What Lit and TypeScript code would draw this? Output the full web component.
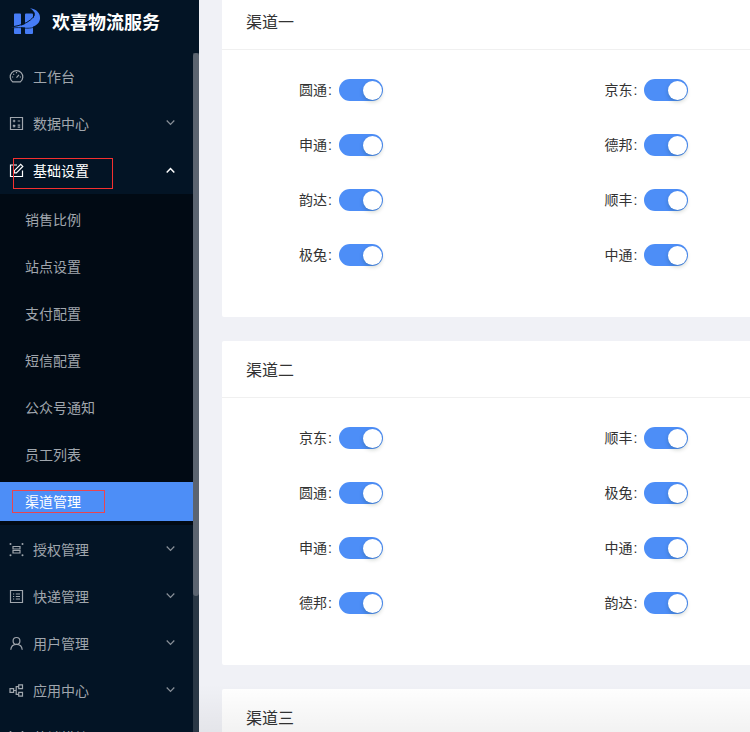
import { LitElement, html, css, svg } from "lit";
import { customElement, property } from "lit/decorators.js";
import { classMap } from "lit/directives/class-map.js";

const icons: Record<string, unknown> = {
  dashboard: svg`<path d="M3.6 12.8A6.3 6.3 0 1 1 11.4 12.8Z"/><path d="M7.5 8.6 10 5.8M7.5 3v1.2M3 8h1.2M10.8 8H12M4.3 4.8l.8.8"/>`,
  data: svg`<path d="M1.5 1.5h12v12h-12Z"/><path d="M3.8 5h2.6M5.1 3.7v2.6M8.7 5h2.5M4 9l2.2 2.2M6.2 9 4 11.2M8.7 9.2h2.5M8.7 11.2h2.5"/>`,
  edit: svg`<path d="M8 2H1.5v11.5h12V7.5"/><path d="M5.3 9.8V7.7L11.7 1.3l2.1 2.1-6.4 6.4Z"/>`,
  auth: svg`<path d="M4 4.500h7v2.500H4ZM4 8.500h7V11H4Z"/><g fill="currentColor" stroke="none"><circle cx="1.500" cy="2" r="1"/><circle cx="13.500" cy="2" r="1"/><circle cx="1.500" cy="13.200" r="1"/><circle cx="13.500" cy="13.200" r="1"/></g>`,
  list: svg`<path d="M1.5 1.5h12v12h-12Z"/><path d="M4 5h1.2M4 7.5h1.2M4 10h1.2M6.8 5H11M6.8 7.5H11M6.8 10H11"/>`,
  user: svg`<circle cx="7.5" cy="4.9" r="3.4"/><path d="M1.8 13.8c.2-3.200 2.400-5.500 5.700-5.500s5.500 2.300 5.700 5.500"/>`,
  apps: svg`<path d="M1 5.700h3.600v3.600H1ZM9.700 1.800h3.800v3.800H9.700ZM9.700 9.400h3.800v3.800H9.700ZM4.600 7.500h2.600M9.700 3.700H7.200v7.600h2.500"/>`,
};

interface Entry {
  label: string;
  icon: string;
  children?: string[];
  leaf?: boolean;
}

const menu: Entry[] = [
  { label: "工作台", icon: "dashboard", leaf: true },
  { label: "数据中心", icon: "data" },
  {
    label: "基础设置",
    icon: "edit",
    children: ["销售比例", "站点设置", "支付配置", "短信配置", "公众号通知", "员工列表", "渠道管理"],
  },
  { label: "授权管理", icon: "auth" },
  { label: "快递管理", icon: "list" },
  { label: "用户管理", icon: "user" },
  { label: "应用中心", icon: "apps" },
  { label: "营销模块", icon: "auth" },
];

const channels = [
  { title: "渠道一", carriers: ["圆通", "京东", "申通", "德邦", "韵达", "顺丰", "极兔", "中通"] },
  { title: "渠道二", carriers: ["京东", "顺丰", "圆通", "极兔", "申通", "中通", "德邦", "韵达"] },
  { title: "渠道三", carriers: [] },
];

@customElement("side-menu")
class SideMenu extends LitElement {
  static styles = css`
    :host {
      display: flex;
      flex-direction: column;
      width: 199px;
      flex: none;
      overflow: hidden;
      background: #031425;
      box-sizing: border-box;
    }
    .brand {
      display: flex;
      align-items: center;
      gap: 11px;
      height: 45px;
      padding: 0 11px 8px;
      flex: none;
    }
    .logo { width: 30px; height: 27px; flex: none; margin-bottom: 2px; fill: #467cf6; }
    .gap { fill: none; stroke: #031425; stroke-width: 1; }
    .name { margin: 0; font-size: 18px; line-height: 28px; font-weight: 700; color: #fff; white-space: nowrap; }
    .scroller { display: flex; flex: 1; min-height: 0; }
    nav { flex: 1; min-width: 0; overflow: hidden; }
    .track { width: 6px; background: #2a3846; }
    .thumb { height: 80%; border-radius: 3px; background: #5b6470; }
    ul { list-style: none; margin: 0; padding: 0; }
    .item {
      position: relative;
      display: flex;
      align-items: center;
      width: 100%;
      height: 39px;
      margin: 4px 0;
      padding: 0 18px 0 9px;
      gap: 9px;
      box-sizing: border-box;
      border: 0;
      background: none;
      color: #a0a6ad;
      font: inherit;
      text-align: left;
      text-decoration: none;
      cursor: pointer;
    }
    li { display: flow-root; }
    .icon { width: 15px; height: 15px; flex: none; }
    .icon, .arrow { fill: none; stroke: currentColor; stroke-width: 1.2; }
    .label { flex: 1; }
    .arrow { width: 9px; height: 9px; opacity: 0.85; margin-bottom: 3px; }
    .open .arrow { transform: scaleY(-1); opacity: 1; margin: 0; stroke-width: 1.5; }
    .open, .selected { color: #fff; }
    .sub { background: #010a14; padding-top: 2px; margin-bottom: 1px; }
    .sub .item { padding-left: 25px; }
    .sub .selected { background: #4d8ef7; }
    .mark { position: absolute; box-sizing: border-box; pointer-events: none; }
    .open .mark { left: 13px; top: 7px; width: 100px; height: 31px; border: 1px solid #f5302f; }
    .selected .mark { left: 12px; top: 8px; width: 93px; height: 23px; border: 1px solid #ea4550; }
  `;

  render() {
    return html`
      <div class="brand">
        <svg class="logo" viewBox="0 0 30 27" aria-hidden="true">
          <path d="M4 5.500h5q1 0 1 1V26H4q-1 0-1-1V6.500q0-1 1-1ZM15 5.500h6q1 0 1 1V25q0 1-1 1h-6q-1 0-1-1V6.500q0-1 1-1Z" />
          <path d="M0 19.500C8 18.500 15 16.500 20 12.500 25 8.500 25 3.500 19 .3 26 1.200 29.700 5.500 29 11 28 17 22 20.300 14 19.500 9 18.800 5 18.800 0 19.500Z" />
          <path class="gap" d="M2 18.700C9 17.500 15 15.600 19.500 11.900 23 9 24 6 22.500 4" />
          <path class="gap" d="M2 19.900C6 19.400 9 19.500 13 20.100 17 20.500 20 20.200 23 19.200" stroke-opacity=".7" />
        </svg>
        <h1 class="name">欢喜物流服务</h1>
      </div>
      <div class="scroller">
        <nav aria-label="主菜单"><ul>${menu.map((entry) => this.renderEntry(entry))}</ul></nav>
        <div class="track"><div class="thumb"></div></div>
      </div>
    `;
  }

  renderEntry(entry: Entry) {
    const open = !!entry.children;
    const icon = html`<svg class="icon" viewBox="0 0 15 15" aria-hidden="true">${icons[entry.icon]}</svg>`;
    if (entry.leaf) {
      return html`<li><a class="item" href="#home">${icon}<span class="label">${entry.label}</span></a></li>`;
    }
    return html`<li>
      <button type="button" class=${classMap({ item: true, open })} aria-expanded=${open}>
        ${icon}<span class="label">${entry.label}</span>
        <svg class="arrow" viewBox="0 0 9 9" aria-hidden="true"><path d="M.7 2.500 4.500 6.500 8.300 2.500" /></svg>
        ${open ? html`<span class="mark"></span>` : ""}
      </button>
      ${open ? html`<ul class="sub">${entry.children!.map((label, i, all) => {
        const selected = i === all.length - 1;
        return html`<li><a class=${classMap({ item: true, selected })} href="#channel">
          <span class="label">${label}</span>${selected ? html`<span class="mark"></span>` : ""}
        </a></li>`;
      })}</ul>` : ""}
    </li>`;
  }
}

@customElement("channel-card")
class ChannelCard extends LitElement {
  @property() heading = "";
  @property({ attribute: false }) carriers: string[] = [];

  static styles = css`
    :host { display: block; flex: none; background: #fff; border-radius: 2px 0 0 2px; }
    h2 {
      margin: 0;
      padding: 18px 24px 14px;
      font-size: 16px;
      line-height: 24px;
      font-weight: 400;
      color: #333;
      border-bottom: 1px solid #f0f0f0;
    }
    .grid {
      display: grid;
      grid-template-columns: 2fr 1fr;
      row-gap: 23px;
      padding: 24px 0 46px 70px;
    }
    .field { display: flex; align-items: center; gap: 7px; height: 32px; }
    label { width: 40px; text-align: right; white-space: nowrap; color: #333; }
    .colon { margin-left: 1px; }
    input {
      appearance: none;
      display: flex;
      align-items: center;
      width: 44px;
      height: 22px;
      margin: 0;
      padding: 0 1px;
      border-radius: 11px;
      background: #bfbfbf;
      cursor: pointer;
      flex: none;
    }
    input::before {
      content: "";
      width: 19px;
      height: 19px;
      border-radius: 50%;
      background: #fff;
      box-shadow: 0 2px 4px rgba(0, 35, 11, 0.2);
    }
    input:checked { background: #4d8ef7; justify-content: flex-end; }
  `;

  render() {
    return html`
      <h2>${this.heading}</h2>
      <div class="grid">
        ${this.carriers.map((name, i) => html`<div class="field">
          <label for="c${i}">${name}<span class="colon">:</span></label>
          <input id="c${i}" type="checkbox" role="switch" checked />
        </div>`)}
      </div>
    `;
  }
}

@customElement("app-root")
class AppRoot extends LitElement {
  static styles = css`
    :host {
      display: flex;
      position: relative;
      height: 100vh;
      overflow: hidden;
      background: #f0f1f6;
      font-family: "Liberation Sans", "Noto Sans CJK SC", sans-serif;
      font-size: 14px;
      line-height: 22px;
    }
    main {
      flex: 1;
      min-width: 0;
      display: flex;
      flex-direction: column;
      gap: 24px;
      margin-top: -7px;
      padding-left: 23px;
      overflow: hidden;
    }
    .fade {
      position: absolute;
      inset: auto 0 0 199px;
      height: 48px;
      background: linear-gradient(transparent, rgba(0, 0, 0, 0.05));
      pointer-events: none;
    }
  `;

  render() {
    return html`
      <side-menu></side-menu>
      <main>
        ${channels.map((c) => html`<channel-card .heading=${c.title} .carriers=${c.carriers}></channel-card>`)}
      </main>
      <div class="fade"></div>
    `;
  }
}
